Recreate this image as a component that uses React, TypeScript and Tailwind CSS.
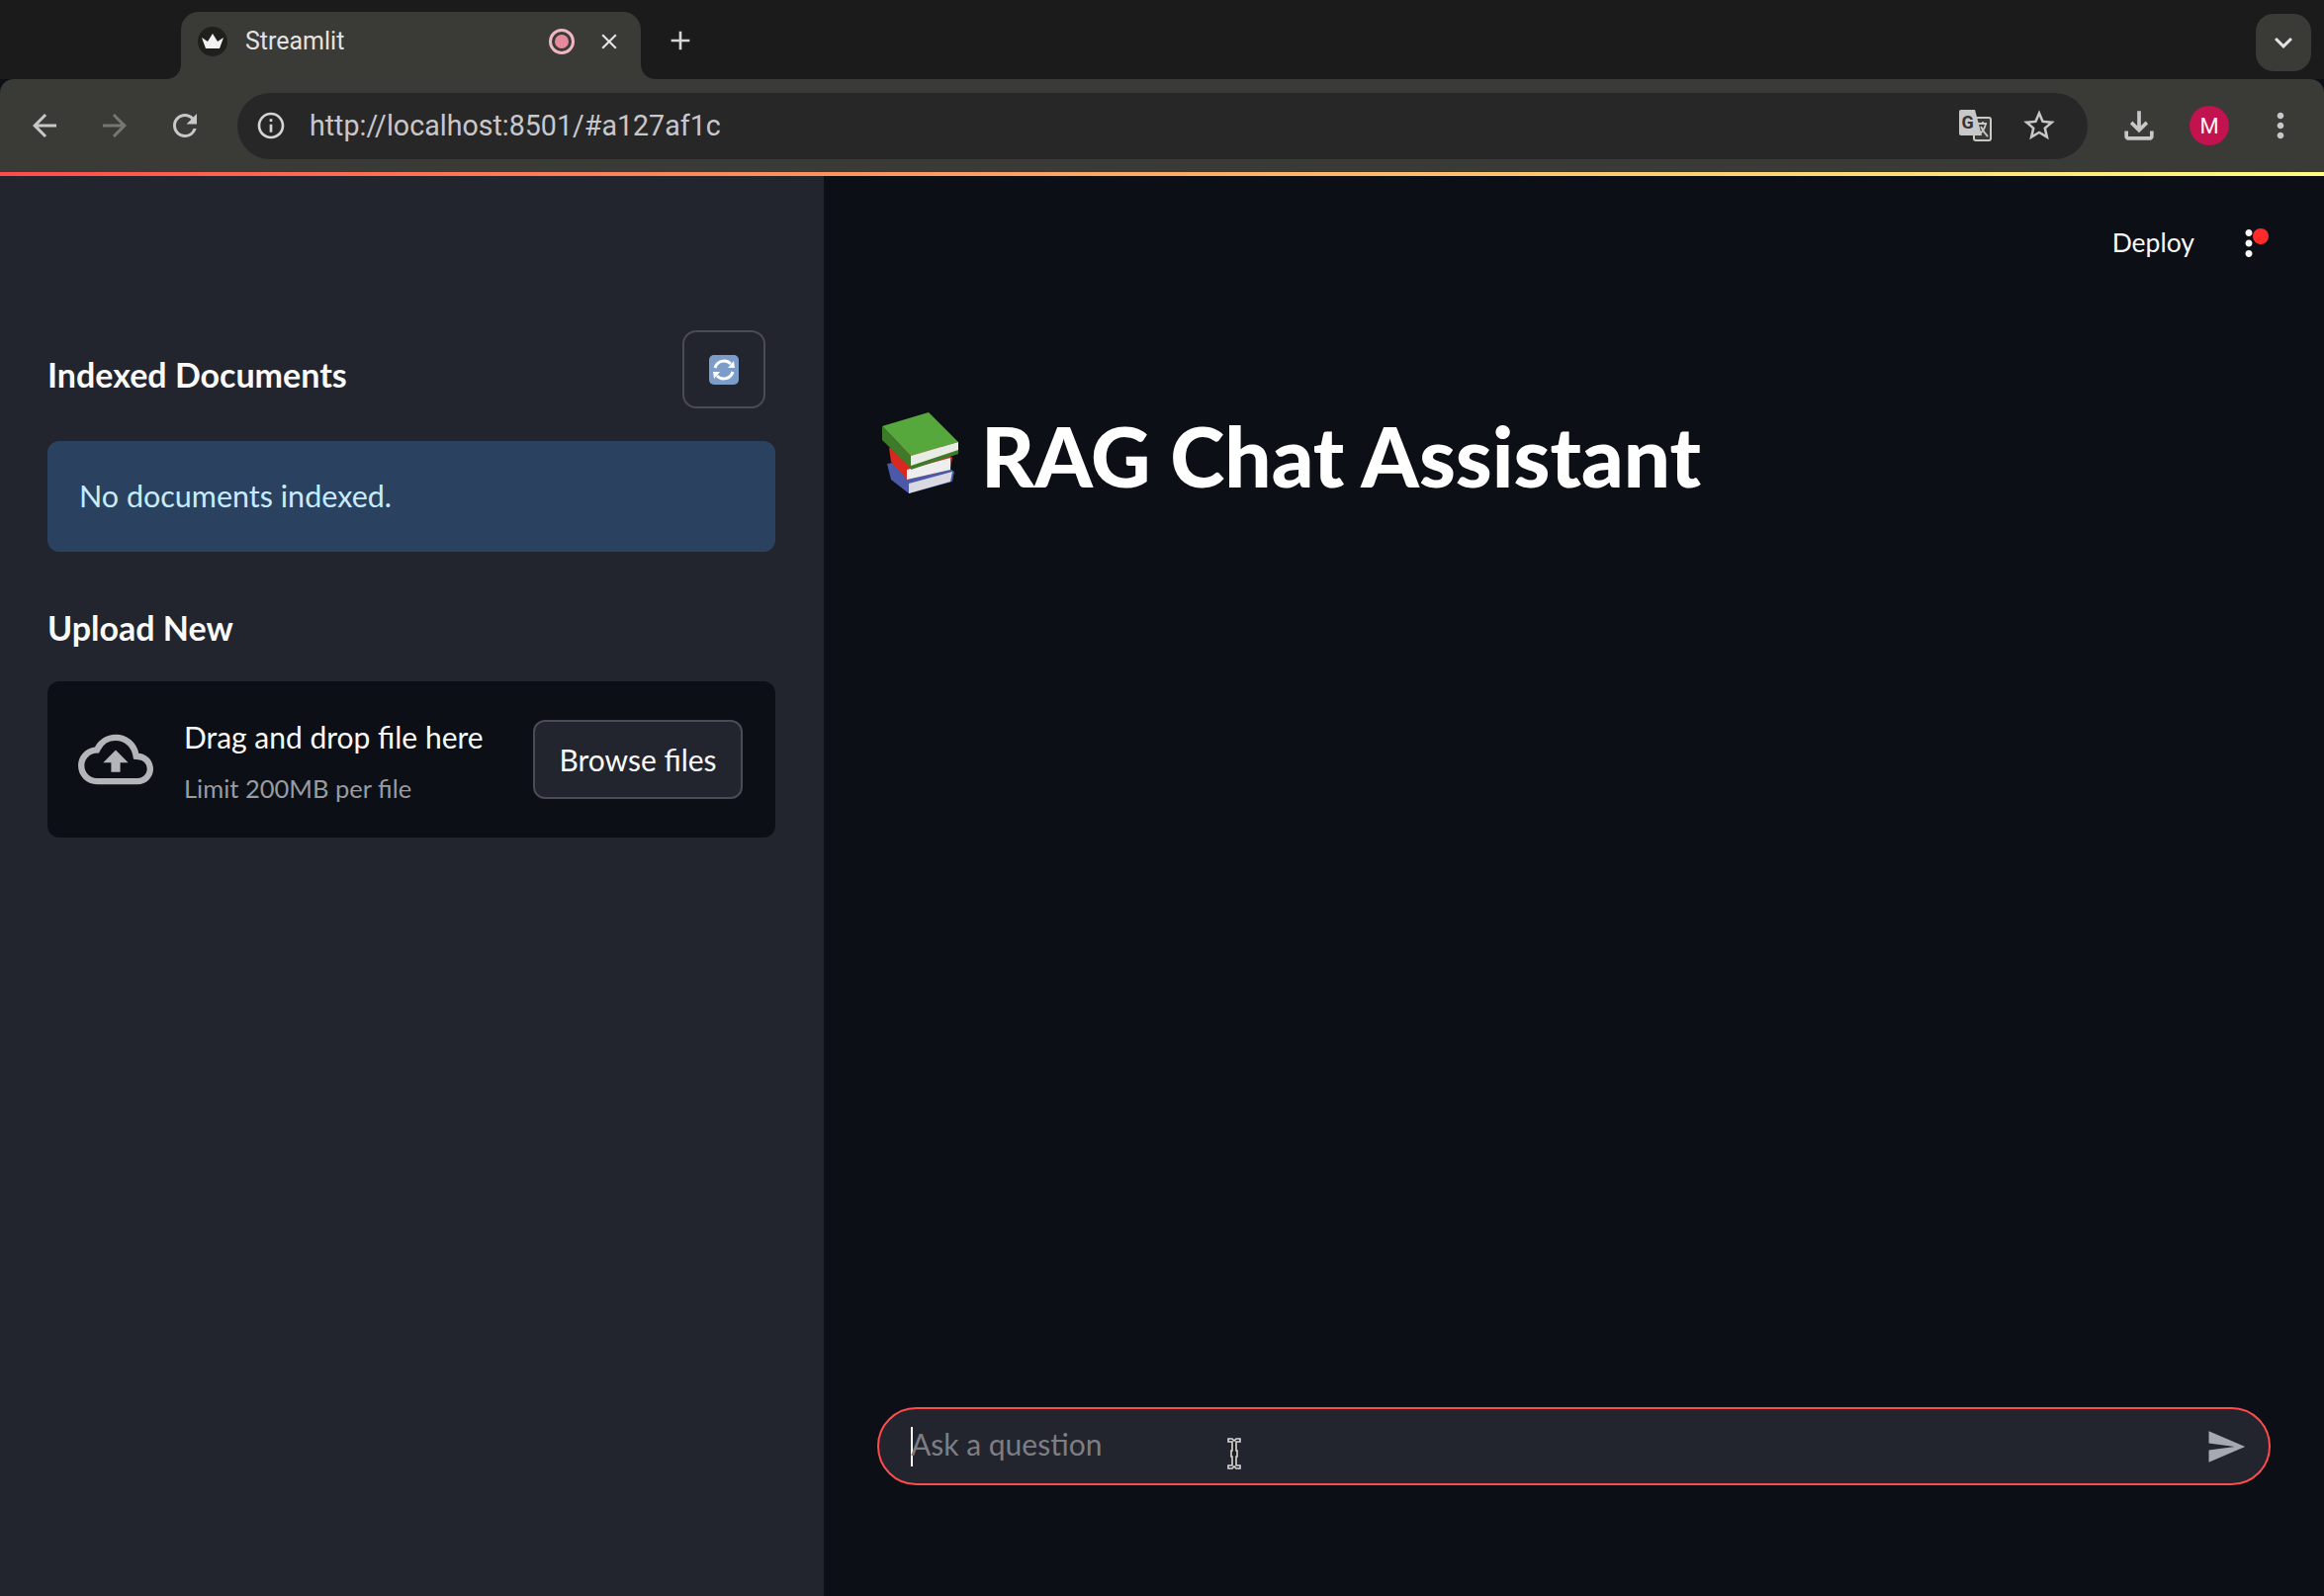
import { MdArrowBack, MdArrowForward, MdRefresh, MdInfoOutline, MdClose, MdAdd, MdKeyboardArrowDown, MdStarBorder, MdOutlineFileDownload, MdMoreVert, MdOutlineCloudUpload, MdSend } from 'react-icons/md'

const chrome = '[font-family:Roboto,sans-serif]'
const app = '[font-family:Lato,sans-serif]'

const Crown = () => (
  <div className="flex h-[30px] w-[30px] items-center justify-center rounded-full bg-[#1f1f1c]">
    <svg viewBox="0 0 24 18" className="h-[18px] w-[24px]">
      <polygon points="1,5 7,9 12,1 17,9 23,5 19,16 5,16" fill="#f2f2f2" />
    </svg>
  </div>
)

const Flare = ({ side }: { side: 'left' | 'right' }) => (
  <svg
    viewBox="0 0 16 16"
    className={`absolute bottom-0 h-4 w-4 ${side === 'left' ? '-left-4' : '-right-4 -scale-x-100'}`}
  >
    <path d="M16 0 V16 H0 C10 16 16 10 16 0 Z" fill="#3a3a37" />
  </svg>
)

const TranslateIcon = () => (
  <svg viewBox="0 0 34 34" className="h-[34px] w-[34px]">
    <rect x="16" y="9" width="17" height="23" rx="2" fill="#3a3a37" stroke="#c8c8c8" strokeWidth="2" />
    <path d="M20 15 H29 M25 13 V15 M28 15 C27 20 24 24 21 26 M23 18 C25 22 27 25 30 28" stroke="#c8c8c8" strokeWidth="1.8" fill="none" />
    <path d="M3 1 H17 L24 27 H3 A2 2 0 0 1 1 25 V3 A2 2 0 0 1 3 1 Z" fill="#c8c8c8" />
    <text x="3.5" y="20" fontSize="18" fontWeight="700" fill="#333" fontFamily="Roboto, sans-serif">G</text>
  </svg>
)

const Books = () => (
  <svg viewBox="0 0 80 84" className="h-[84px] w-[80px]">
    <polygon points="6,52 50,44 74,60 72,70 28,82 10,68" fill="#4a5aa8" />
    <polygon points="28,72 72,60 70,70 28,82" fill="#d9d9e2" />
    <polygon points="8,36 54,28 72,46 70,58 26,68 10,50" fill="#d8281f" />
    <polygon points="26,58 70,46 70,58 26,68" fill="#eeeeee" />
    <polygon points="1,14 48,0 78,30 30,44" fill="#57a83c" />
    <polygon points="1,14 30,44 30,56 1,28" fill="#3d7a2a" />
    <polygon points="30,44 78,30 78,40 30,56" fill="#e8ece4" />
    <polygon points="30,54 78,38 78,42 30,58" fill="#3d7a2a" />
  </svg>
)

const RefreshEmoji = () => (
  <svg viewBox="0 0 32 32" className="h-8 w-8">
    <rect x="1" y="1" width="30" height="30" rx="5" fill="#7c9cc9" />
    <path d="M7 14 A9.5 9.5 0 0 1 23 10" stroke="#fff" strokeWidth="3" fill="none" />
    <polygon points="20,14 27,14 26,7" fill="#fff" />
    <path d="M25 18 A9.5 9.5 0 0 1 9 22" stroke="#fff" strokeWidth="3" fill="none" />
    <polygon points="12,18 5,18 6,25" fill="#fff" />
  </svg>
)

const Sidebar = () => (
  <aside className={`flex w-[833px] shrink-0 flex-col bg-[#23252e] pl-12 pr-[49px] pt-[156px] ${app}`}>
    <div className="flex h-[79px] items-center justify-between pr-[10px]">
      <h2 className="mt-[10px] text-[34px] font-bold leading-none text-[#fafafa]">Indexed Documents</h2>
      <button className="flex h-[79px] w-[84px] items-center justify-center rounded-[14px] border-2 border-[#4a4b55] bg-transparent">
        <RefreshEmoji />
      </button>
    </div>
    <div className="mt-[33px] flex h-[112px] items-center rounded-[12px] bg-[#2a4260] px-8 text-[30.5px] text-[#c7ebff]">
      No documents indexed.
    </div>
    <h2 className="mt-[57px] text-[34px] font-bold leading-10 text-[#fafafa]">Upload New</h2>
    <div className="mt-[34px] flex h-[158px] items-center rounded-[12px] bg-[#0c0f15] pl-[31px] pr-[33px]">
      <MdOutlineCloudUpload className="h-[76px] w-[76px] shrink-0 text-[#b4b5b9]" />
      <div className="ml-[31px] mt-[3px] flex flex-1 flex-col gap-[18px]">
        <span className="text-[30px] leading-9 text-[#fafafa]">Drag and drop file here</span>
        <span className="text-[25.5px] leading-8 text-[#9a9ba1]">Limit 200MB per file</span>
      </div>
      <button className="flex h-[80px] w-[212px] items-center justify-center rounded-[12px] border-2 border-[#4a4b55] bg-[#23252e] text-[30px] text-[#fafafa]">
        Browse files
      </button>
    </div>
  </aside>
)

const Main = () => (
  <main className={`relative flex flex-1 flex-col bg-[#0c0f15] pb-[112px] pl-[54px] pr-[54px] ${app}`}>
    <div className="flex h-[136px] items-center justify-end pr-[8px]">
      <span className="text-[26.5px] text-[#fafafa]">Deploy</span>
      <div className="relative ml-[41px] flex h-[42px] w-7 items-center justify-center">
        <MdMoreVert className="h-[42px] w-[42px] shrink-0 text-[#fafafa]" />
        <span className="absolute right-[-6px] top-[6px] h-4 w-4 rounded-full bg-[#ff2b2b]" />
      </div>
    </div>
    <div className="mt-[100px] flex items-center pl-1">
      <Books />
      <h1 className="ml-[21px] mt-[6px] text-[83.5px] font-black leading-none text-white">RAG Chat Assistant</h1>
    </div>
    <div className="flex-1" />
    <div className="relative flex h-[79px] items-center rounded-full border-2 border-[#ff4b4b] bg-[#23252e] pl-8 pr-[22px]">
      <span className="mr-[-2px] h-10 w-0.5 bg-white" />
      <span className="-mt-[5px] text-[30px] text-[#7d7e85]">Ask a question</span>
      <div className="flex-1" />
      <MdSend className="h-[42px] w-[42px] text-[#a7a9b1]" />
      <svg viewBox="0 0 16 34" className="absolute left-[351px] top-[28px] h-[34px] w-4">
        <path d="M2 2 H6 L8 4 L10 2 H14 V5 H10 V14 H11 V20 H10 V29 H14 V32 H10 L8 30 L6 32 H2 V29 H6 V20 H5 V14 H6 V5 H2 Z" fill="#1d1d1d" stroke="#d8d8d8" strokeWidth="1.6" />
      </svg>
    </div>
  </main>
)

export default function App() {
  return (
    <div className="flex h-[1614px] w-[2350px] flex-col overflow-hidden bg-[#0c0f15]">
      <div className={`flex h-20 shrink-0 items-end bg-[#1b1b1b] pl-[183px] pr-[13px] ${chrome}`}>
        <div className="relative flex h-[68px] w-[465px] items-center rounded-t-[18px] bg-[#3a3a37] pb-2 pl-[17px] pr-[19px]">
          <Flare side="left" />
          <Flare side="right" />
          <Crown />
          <span className="ml-[18px] flex-1 text-[25px] text-[#e3e3e3]">Streamlit</span>
          <span className="mr-[22px] flex h-[26px] w-[26px] items-center justify-center rounded-full border-[3px] border-[#efb7c2]">
            <span className="h-3.5 w-3.5 rounded-full bg-[#e58a9c]" />
          </span>
          <MdClose className="h-[26px] w-[26px] text-[#e3e3e3]" />
        </div>
        <MdAdd className="mb-[23px] ml-[24px] h-[32px] w-[32px] text-[#d5d5d5]" />
        <div className="flex-1" />
        <div className="mb-2 flex h-[58px] w-14 items-center justify-center rounded-[18px] bg-[#3a3a37]">
          <MdKeyboardArrowDown className="h-9 w-9 text-[#e3e3e3]" />
        </div>
      </div>
      <div className={`flex h-[94px] shrink-0 items-center rounded-t-[14px] bg-[#3a3a37] pl-[27px] ${chrome}`}>
        <MdArrowBack className="h-9 w-9 text-[#c8c8c8]" />
        <MdArrowForward className="ml-[35px] h-9 w-9 text-[#77776f]" />
        <MdRefresh className="ml-[35px] h-9 w-9 text-[#c8c8c8]" />
        <div className="ml-[35px] flex h-[67px] w-[1871px] items-center rounded-full bg-[#272727] pl-[18px] pr-[30px]">
          <MdInfoOutline className="h-[32px] w-[32px] text-[#d5d5d5]" />
          <span className="ml-[23px] flex-1 text-[28.6px] text-[#c8c8cc]">http://localhost:8501/#a127af1c</span>
          <TranslateIcon />
          <MdStarBorder className="ml-[29px] h-[38px] w-[38px] text-[#c8c8c8]" />
        </div>
        <MdOutlineFileDownload className="ml-[30px] h-[44px] w-[44px] text-[#c8c8c8]" />
        <div className="ml-[29px] flex h-10 w-10 items-center justify-center rounded-full bg-[#c2124f] text-[22px] text-[#f5f5f5]">M</div>
        <MdMoreVert className="ml-[32px] h-10 w-10 text-[#c8c8c8]" />
      </div>
      <div className="h-1 shrink-0 bg-gradient-to-r from-[#ff4b4b] to-[#fffd80]" />
      <div className="flex min-h-0 flex-1">
        <Sidebar />
        <Main />
      </div>
    </div>
  )
}
